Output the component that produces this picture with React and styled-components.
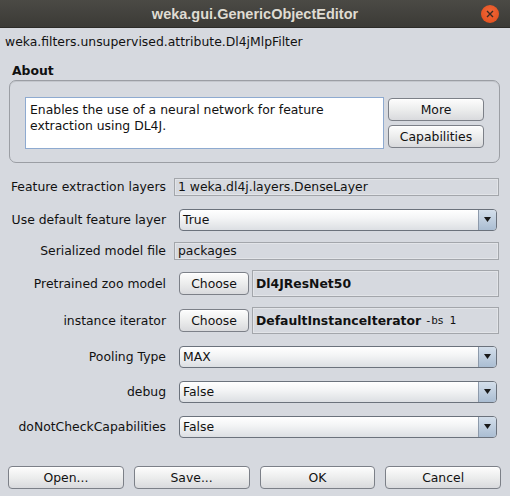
import styled, { createGlobalStyle } from "styled-components"

const GlobalStyle = createGlobalStyle`
  html, body {
    margin: 0;
    padding: 0;
    background: #d6d9df;
  }
  body {
    font-family: "DejaVu Sans", "Noto Sans", sans-serif;
    font-size: 12.4px;
    color: #111;
  }
`

const Window = styled.div`
  width: 510px;
  height: 496px;
  display: flex;
  flex-direction: column;
  background: #d6d9df;
  overflow: hidden;
`

const TitleBar = styled.div`
  height: 28px;
  flex: none;
  display: grid;
  grid-template-columns: 1fr auto 1fr;
  align-items: center;
  background: linear-gradient(#4b4a45, #3b3a36);
  border-bottom: 1px solid #2c2b28;
  box-sizing: border-box;
`

const Title = styled.div`
  grid-column: 2;
  font-family: "Liberation Sans", Arial, sans-serif;
  font-weight: bold;
  font-size: 14.5px;
  color: #dfdbd2;
`

const CloseButton = styled.div`
  grid-column: 3;
  justify-self: end;
  margin-right: 11px;
  width: 18px;
  height: 18px;
  border-radius: 50%;
  background: radial-gradient(circle at 50% 40%, #f0673a, #df4b17);
  display: flex;
  align-items: center;
  justify-content: center;
`

const ClassName = styled.div`
  height: 28px;
  line-height: 28px;
  padding-left: 5px;
`

const SectionLabel = styled.div`
  font-weight: bold;
  padding-left: 12px;
  margin-top: 7px;
  line-height: 16px;
`

const AboutPanel = styled.div`
  margin: 1px 10px 0 9px;
  height: 83px;
  box-sizing: border-box;
  border: 1px solid #9b9ea4;
  border-radius: 7px;
  box-shadow: inset 0 1px 0 #c4c7cd;
  padding: 16px 15px 0 15px;
  display: flex;
  gap: 4px;
`

const AboutText = styled.div`
  flex: 1;
  height: 52px;
  box-sizing: border-box;
  background: #fff;
  border: 1px solid #8eaad0;
  padding: 4px 4px;
  line-height: 16px;
`

const SideButtons = styled.div`
  width: 96px;
  display: flex;
  flex-direction: column;
  gap: 4px;
  padding-top: 1px;
`

const Button = styled.button`
  font-family: inherit;
  font-size: 12.4px;
  color: #111;
  height: ${(p) => p.$h || 23}px;
  width: ${(p) => (p.$w ? p.$w + "px" : "auto")};
  padding: 0;
  box-sizing: border-box;
  border: 1px solid #7c8088;
  border-radius: 4px;
  background: linear-gradient(#fdfdfd, #eceded 50%, #d9dadd);
  box-shadow: inset 0 1px 0 #fff;
  flex: ${(p) => (p.$grow ? 1 : "none")};
`

const Form = styled.div`
  margin-top: 7px;
  display: flex;
  flex-direction: column;
  padding: 0 11px 0 10px;
`

const Row = styled.div`
  height: ${(p) => p.$h}px;
  display: grid;
  grid-template-columns: 156px 1fr;
  column-gap: 8px;
  align-items: center;
`

const Label = styled.div`
  text-align: right;
  white-space: nowrap;
`

const TextField = styled.div`
  height: ${(p) => p.$h || 18}px;
  box-sizing: border-box;
  border: 1px solid #a3a6ab;
  box-shadow: inset 0 0 0 1px #e2e4e8;
  padding: 0 3px;
  display: flex;
  align-items: center;
  font-weight: ${(p) => (p.$bold ? "bold" : "normal")};
  white-space: nowrap;
  overflow: hidden;
`

const Small = styled.span`
  font-family: "DejaVu Sans Mono", monospace;
  font-weight: normal;
  font-size: 11px;
  letter-spacing: -0.5px;
  margin-left: 4px;
`

const Combo = styled.div`
  margin-left: 5px;
  margin-right: 2px;
  height: 22px;
  box-sizing: border-box;
  border: 1px solid #6b727c;
  border-radius: 4px;
  background: linear-gradient(#ffffff, #f4f5f6 40%, #dcdfe3);
  display: flex;
  align-items: stretch;
  overflow: hidden;
`

const ComboValue = styled.div`
  flex: 1;
  padding-left: 3px;
  display: flex;
  align-items: center;
`

const ComboArrow = styled.div`
  width: 17px;
  border-left: 1px solid #8d9aab;
  background: linear-gradient(#d4dfeb, #aabdd2);
  display: flex;
  align-items: center;
  justify-content: center;
`

const ChooserRow = styled.div`
  display: flex;
  align-items: center;
  gap: 3px;
  margin-left: 5px;
`

const ButtonBar = styled.div`
  margin-top: auto;
  padding: 0 9px 7px 8px;
  display: flex;
  gap: 10px;
`

const Triangle = () => (
  <svg width="7" height="5" viewBox="0 0 7 5">
    <path d="M0 0 H7 L3.5 5 Z" fill="#1a1a1a" />
  </svg>
)

const ComboBox = ({ value }) => (
  <Combo>
    <ComboValue>{value}</ComboValue>
    <ComboArrow>
      <Triangle />
    </ComboArrow>
  </Combo>
)

const Chooser = ({ value, bold, extra }) => (
  <ChooserRow>
    <Button $w={70}>Choose</Button>
    <TextField $h={27} $bold={bold} style={{ flex: 1 }}>
      {value}
      {extra && <Small>{extra}</Small>}
    </TextField>
  </ChooserRow>
)

export default function App() {
  return (
    <Window>
      <GlobalStyle />
      <TitleBar>
        <Title>weka.gui.GenericObjectEditor</Title>
        <CloseButton>
          <svg width="8" height="8" viewBox="0 0 8 8">
            <path d="M1 1 L7 7 M7 1 L1 7" stroke="#3a2a22" strokeWidth="1.4" />
          </svg>
        </CloseButton>
      </TitleBar>
      <ClassName>weka.filters.unsupervised.attribute.Dl4jMlpFilter</ClassName>
      <SectionLabel>About</SectionLabel>
      <AboutPanel>
        <AboutText>
          Enables the use of a neural network for feature
          <br />
          extraction using DL4J.
        </AboutText>
        <SideButtons>
          <Button $h={23}>More</Button>
          <Button $h={23}>Capabilities</Button>
        </SideButtons>
      </AboutPanel>
      <Form>
        <Row $h={33}>
          <Label>Feature extraction layers</Label>
          <TextField>1 weka.dl4j.layers.DenseLayer</TextField>
        </Row>
        <Row $h={33}>
          <Label>Use default feature layer</Label>
          <ComboBox value="True" />
        </Row>
        <Row $h={29}>
          <Label>Serialized model file</Label>
          <TextField>packages</TextField>
        </Row>
        <Row $h={36}>
          <Label>Pretrained zoo model</Label>
          <Chooser value="Dl4JResNet50" bold />
        </Row>
        <Row $h={38}>
          <Label>instance iterator</Label>
          <Chooser value="DefaultInstanceIterator" extra="-bs 1" bold />
        </Row>
        <Row $h={35}>
          <Label>Pooling Type</Label>
          <ComboBox value="MAX" />
        </Row>
        <Row $h={35}>
          <Label>debug</Label>
          <ComboBox value="False" />
        </Row>
        <Row $h={35}>
          <Label>doNotCheckCapabilities</Label>
          <ComboBox value="False" />
        </Row>
      </Form>
      <ButtonBar>
        <Button $grow>Open...</Button>
        <Button $grow>Save...</Button>
        <Button $grow>OK</Button>
        <Button $grow>Cancel</Button>
      </ButtonBar>
    </Window>
  )
}
